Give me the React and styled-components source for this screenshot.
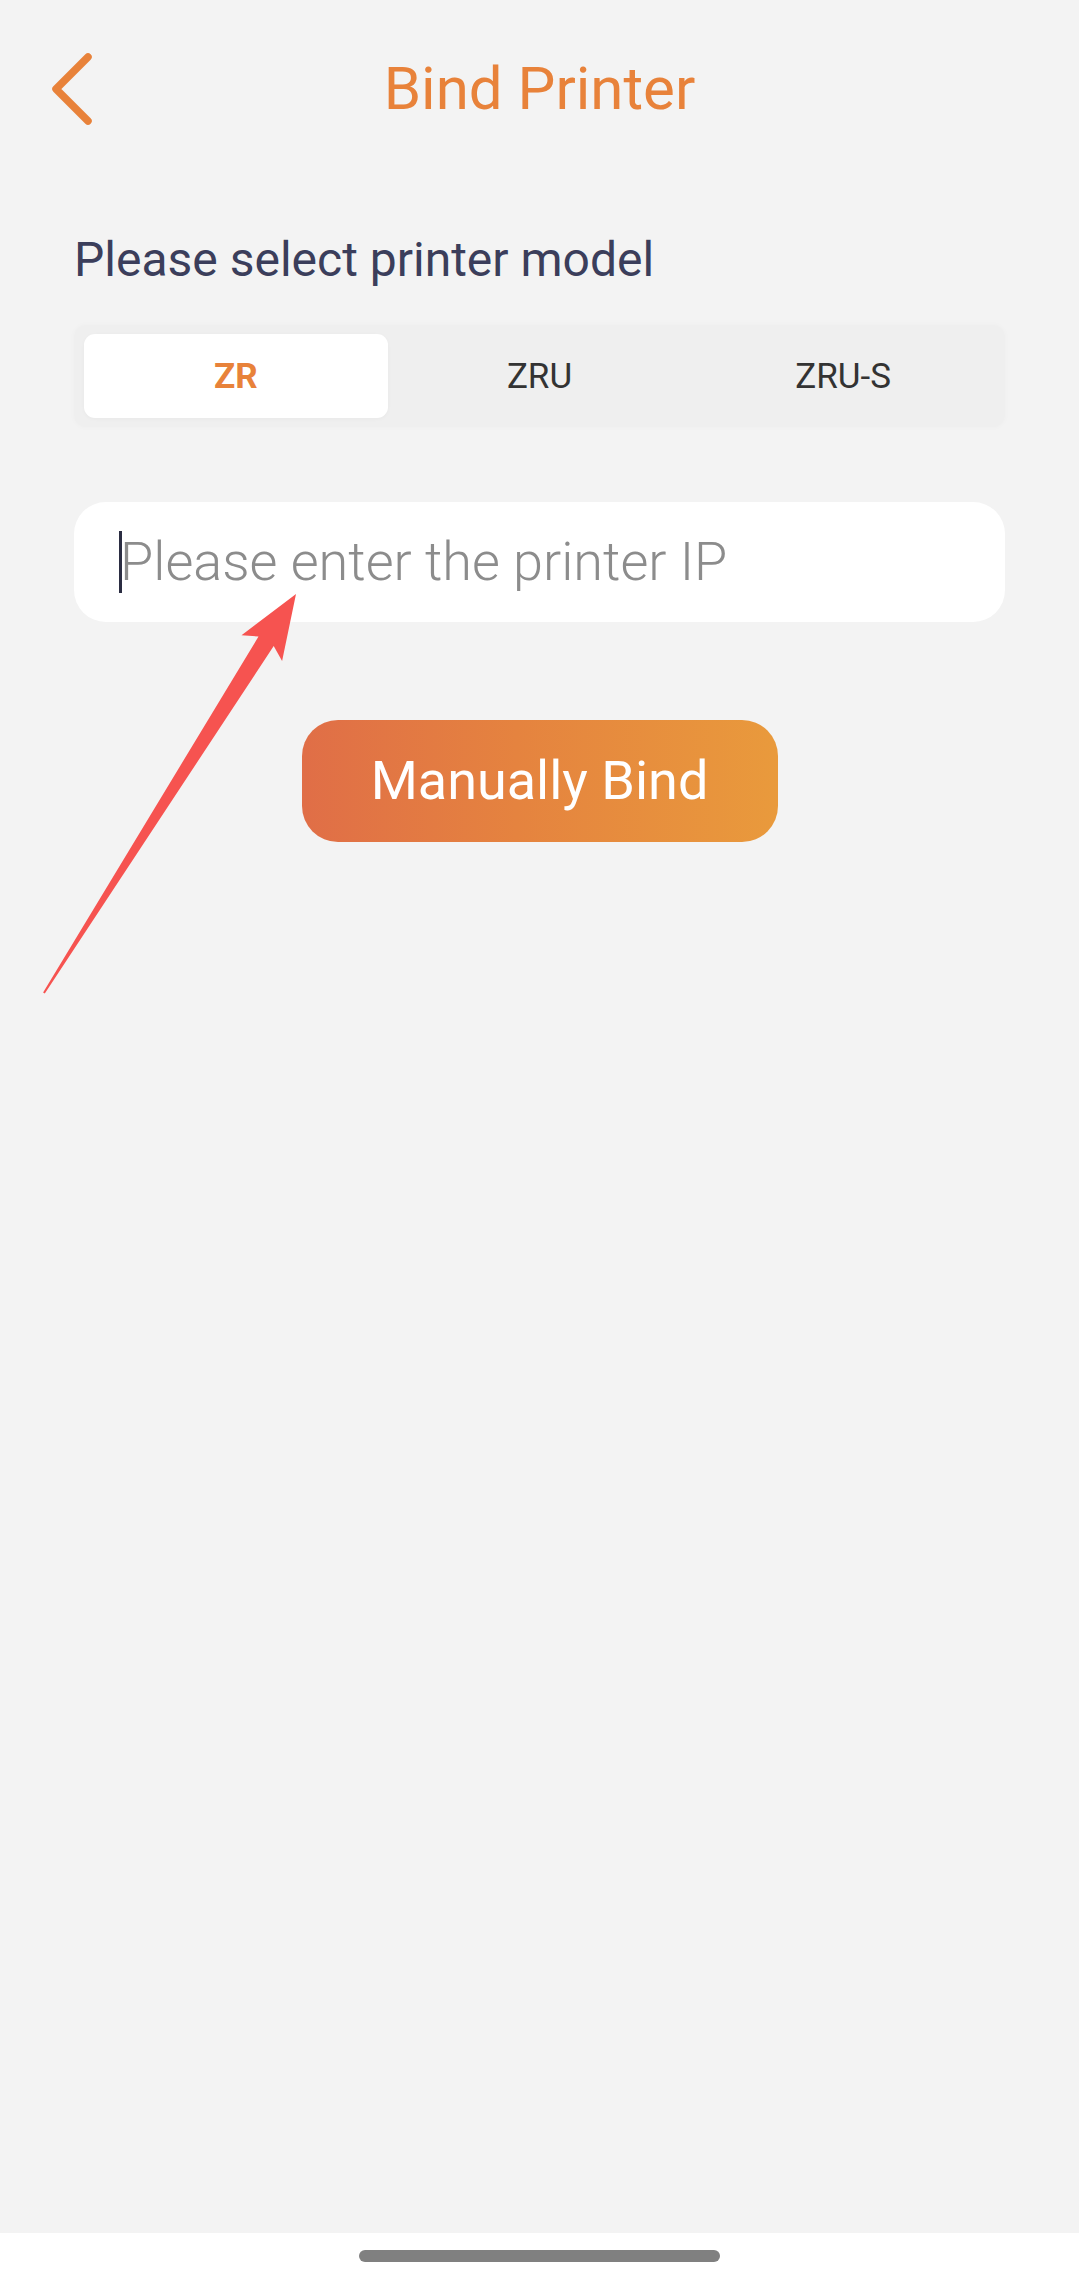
import React from 'react';
import styled, { createGlobalStyle } from 'styled-components';

const GlobalStyle = createGlobalStyle`
html, body {
  margin: 0;
  padding: 0;
  background: #ffffff;
}
body {
  font-family: Roboto, "Noto Sans", "Liberation Sans", sans-serif;
}
* {
  box-sizing: border-box;
}
`;

const Page = styled.div`
position: relative;
width: 1079px;
height: 2278px;
display: flex;
flex-direction: column;
`;

const Screen = styled.div`
flex: 1;
background: #f3f3f3;
display: flex;
flex-direction: column;
`;

const Header = styled.div`
height: 178px;
display: grid;
grid-template-columns: 1fr auto 1fr;
align-items: center;
`;

const BackButton = styled.div`
padding-left: 48px;
display: flex;
align-items: center;
`;

const Title = styled.h1`
margin: 0;
font-size: 60px;
line-height: 70px;
font-weight: 400;
color: #e8823a;
`;

const Content = styled.div`
padding: 0 74px;
display: flex;
flex-direction: column;
`;

const Label = styled.div`
margin-top: 54px;
font-size: 48px;
line-height: 56px;
color: #3b3e5b;
`;

const ModelBar = styled.div`
margin-top: 37px;
height: 102px;
padding: 9px 10px;
display: grid;
grid-template-columns: repeat(3, 1fr);
background: #efefef;
border-radius: 12px;
box-shadow: 0 0 6px rgba(0, 0, 0, 0.025);
`;

const ModelTab = styled.div`
display: flex;
align-items: center;
justify-content: center;
border-radius: 11px;
font-size: 35px;
background: ${({ active }) => (active ? '#ffffff' : 'transparent')};
color: ${({ active }) => (active ? '#e8823a' : '#333333')};
font-weight: ${({ active }) => (active ? 700 : 400)};
box-shadow: ${({ active }) => (active ? '0 1px 4px rgba(0,0,0,0.03)' : 'none')};
`;

const Field = styled.div`
position: relative;
margin-top: 75px;
height: 120px;
padding-left: 46px;
border-radius: 32px;
background: #ffffff;
font-size: 54px;
line-height: 120px;
font-weight: 300;
color: #8c8c8c;
`;

const Caret = styled.span`
position: absolute;
left: 45px;
top: 29px;
width: 3px;
height: 62px;
background: #2b2d42;
`;

const BindButton = styled.button`
align-self: center;
margin-top: 98px;
width: 476px;
height: 122px;
border: none;
outline: none;
border-radius: 36px;
background: linear-gradient(90deg, #e06e47 0%, #e5833f 45%, #e99a3c 100%);
color: #ffffff;
font-family: Roboto, "Noto Sans", "Liberation Sans", sans-serif;
font-size: 54px;
line-height: 122px;
font-weight: 400;
padding: 0;
`;

const NavBar = styled.div`
height: 45px;
background: #ffffff;
display: flex;
justify-content: center;
align-items: center;
`;

const HomeIndicator = styled.div`
width: 361px;
height: 12px;
border-radius: 6px;
background: #808080;
`;

const Annotation = styled.svg`
position: absolute;
left: 0;
top: 0;
pointer-events: none;
`;

const models = ['ZR', 'ZRU', 'ZRU-S'];

export default function App() {
    return (
        <Page>
            <GlobalStyle />
            <Screen>
                <Header>
                    <BackButton>
                        <svg width="44" height="80" viewBox="0 0 44 80">
                            <polyline points="40,8 8,40 40,72" fill="none" stroke="#e8823a" strokeWidth="7.5" strokeLinecap="round" strokeLinejoin="round" />
                        </svg>
                    </BackButton>
                    <Title>Bind Printer</Title>
                    <div />
                </Header>
                <Content>
                    <Label>Please select printer model</Label>
                    <ModelBar>
                        {models.map((m, i) => (
                            <ModelTab key={m} active={i === 0}>{m}</ModelTab>
                        ))}
                    </ModelBar>
                    <Field>
                        <Caret />
                        Please enter the printer IP
                    </Field>
                    <BindButton>Manually Bind</BindButton>
                </Content>
            </Screen>
            <NavBar>
                <HomeIndicator />
            </NavBar>
            {/* red annotation arrow drawn over the page */}
            <Annotation width="1079" height="1000" viewBox="0 0 1079 1000">
                <polygon
                    points="296,594 282.1,660.9 273.7,646.1 44.8,993.5 43.1,992.5 258.5,636.5 241.5,635.3"
                    fill="#f65350"
                    strokeLinejoin="round"
                />
            </Annotation>
        </Page>
    );
}
